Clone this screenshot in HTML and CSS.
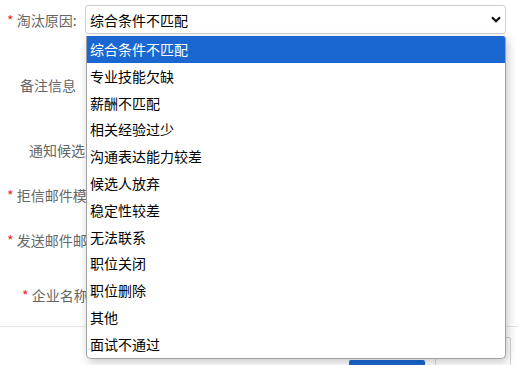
FILE: index.html
```html
<!DOCTYPE html>
<html lang="zh">
<head>
<meta charset="utf-8">
<link rel="stylesheet" href="styles.css">
</head>
<body>
<div class="page">
  <form class="form">
    <div class="row row-reason">
      <label class="label lbl-reason"><span class="req">*</span> 淘汰原因:</label>
      <div class="select">
        <span class="select-text">综合条件不匹配</span>
        <svg class="chev" width="10" height="7" viewBox="0 0 10 7"><path d="M1 1.2 L5 5.2 L9 1.2" fill="none" stroke="#111" stroke-width="2.2"/></svg>
      </div>
    </div>
    <div class="row row-remark"><label class="label lbl-remark">备注信息</label></div>
    <div class="row row-notify"><label class="label lbl-notify">通知候选人:</label></div>
    <div class="row row-tpl"><label class="label lbl-tpl"><span class="req">*</span> 拒信邮件模板:</label></div>
    <div class="row row-mail"><label class="label lbl-mail"><span class="req">*</span> 发送邮件邮箱:</label></div>
    <div class="row row-corp"><label class="label lbl-corp"><span class="req">*</span> 企业名称:</label></div>
  </form>
  <div class="footer">
    <div class="btn btn-primary"></div>
    <div class="btn btn-plain"></div>
  </div>
  <ul class="dropdown">
    <li class="opt active">综合条件不匹配</li>
    <li class="opt">专业技能欠缺</li>
    <li class="opt">薪酬不匹配</li>
    <li class="opt">相关经验过少</li>
    <li class="opt">沟通表达能力较差</li>
    <li class="opt">候选人放弃</li>
    <li class="opt">稳定性较差</li>
    <li class="opt">无法联系</li>
    <li class="opt">职位关闭</li>
    <li class="opt">职位删除</li>
    <li class="opt">其他</li>
    <li class="opt">面试不通过</li>
  </ul>
</div>
</body>
</html>
```
FILE: styles.css
```css
* { box-sizing: border-box; }
html, body { margin: 0; padding: 0; background: #fff; }
body {
  font-family: "Microsoft YaHei", "Noto Sans CJK SC", sans-serif;
  font-size: 14px;
  color: #666;
  width: 518px;
  height: 365px;
  overflow: hidden;
}
.page { position: relative; width: 518px; height: 365px; }
.form { display: flex; flex-direction: column; }
.row { display: flex; align-items: center; white-space: nowrap; }
.label { color: #666; line-height: 20px; max-width: 86px; overflow: hidden; }
.req { color: #f5222d; }
.row-reason { height: 29px; margin-top: 5px; }
.lbl-reason { width: 85px; padding-left: 7px; }
.row-remark { height: 20px; margin-top: 41px; }
.lbl-remark { padding-left: 20px; }
.row-notify { height: 20px; margin-top: 45px; }
.lbl-notify { padding-left: 29px; }
.row-tpl { height: 20px; margin-top: 25px; }
.lbl-tpl { padding-left: 7px; }
.row-mail { height: 20px; margin-top: 25px; }
.lbl-mail { padding-left: 7px; }
.row-corp { height: 20px; margin-top: 35px; }
.lbl-corp { padding-left: 22px; }
.select {
  width: 421px;
  height: 29px;
  border: 1px solid #cfcfcf;
  border-radius: 3px;
  display: flex;
  align-items: center;
  justify-content: space-between;
  padding: 0 4px 0 4px;
  color: #000;
  background: #fff;
}
.select-text { line-height: 20px; }
.chev { display: block; }
.footer {
  margin-top: 21px;
  border-top: 1px solid #e8e8e8;
  height: 40px;
  position: relative;
  display: flex;
}
.btn-primary {
  margin-left: 349px;
  margin-top: 33px;
  width: 76px;
  height: 10px;
  background: #1a67d2;
  border-radius: 2px 2px 0 0;
}
.btn-plain {
  margin-left: 10px;
  margin-top: 10px;
  width: 76px;
  height: 40px;
  border: 1px solid #d4d4d4;
  border-radius: 2px;
}
.dropdown {
  position: absolute;
  left: 86px;
  top: 36px;
  width: 420px;
  margin: 0;
  padding: 0;
  list-style: none;
  background: #fff;
  border: 1px solid #a0a0a0;
  border-top: none;
  border-radius: 0 3px 5px 5px;
  box-shadow: 2px 3px 10px rgba(0, 0, 0, 0.22);
  overflow: hidden;
}
.opt {
  height: 26.8px;
  line-height: 26.8px;
  padding-left: 3px;
  color: #000;
  font-size: 14px;
}
.opt.active { background: #1a67d2; color: #fff; }
```
